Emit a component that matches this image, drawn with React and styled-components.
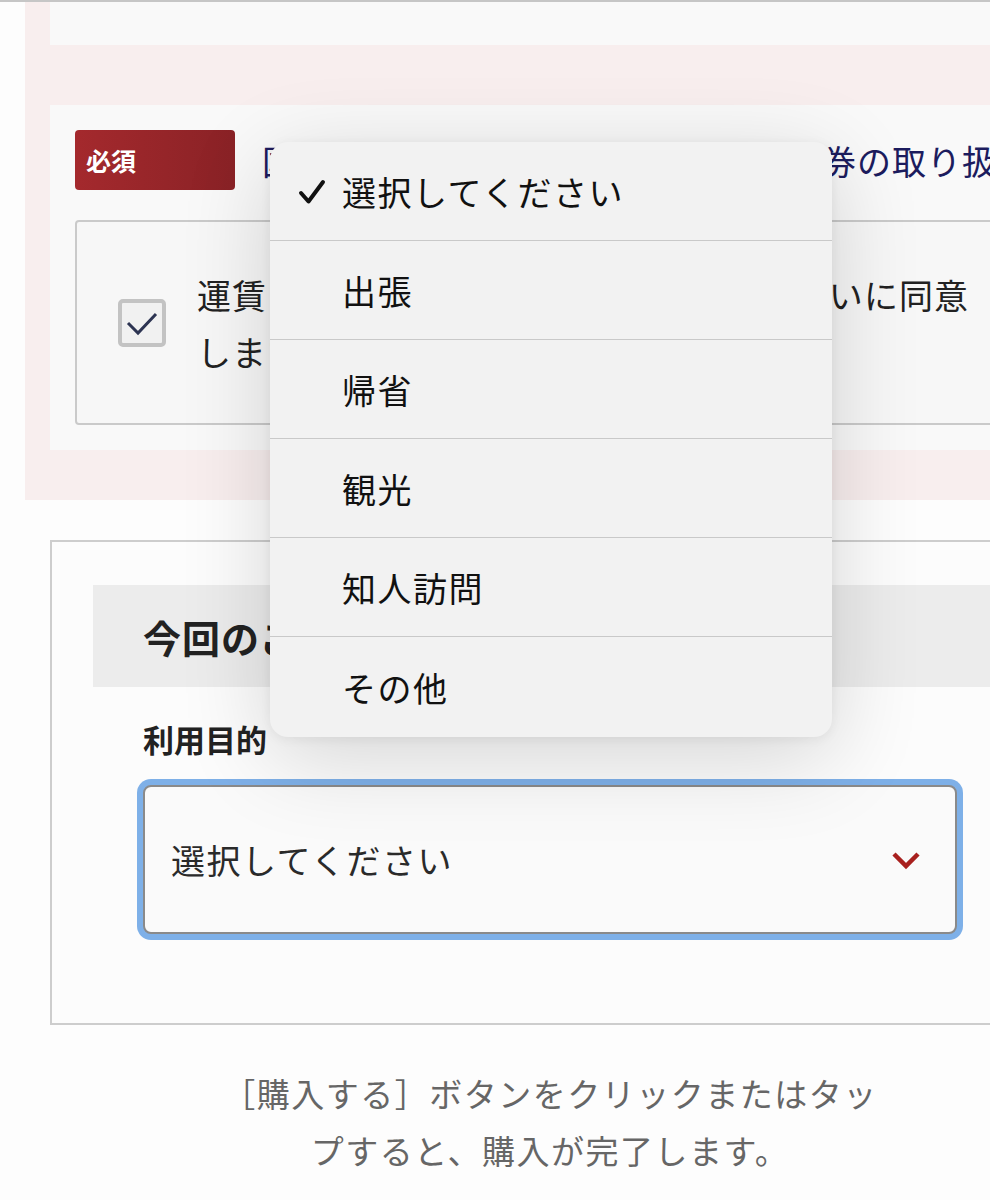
import React from "react";
import styled, { createGlobalStyle } from "styled-components";

const GlobalStyle = createGlobalStyle`
  html, body {
    margin: 0;
    padding: 0;
    background: #fdfdfd;
    overflow: hidden;
  }
  body {
    font-family: "Noto Sans CJK JP", "Noto Sans", sans-serif;
    color: #222;
  }
`;

const Page = styled.div`
  position: relative;
  width: 1100px;
  border-top: 2px solid #c6c6c6;
`;

const PinkBand = styled.div`
  margin-left: 25px;
  background: #f8eeee;
  padding: 0 0 50px 25px;
  display: flex;
  flex-direction: column;
  gap: 60px;
`;

const Card = styled.div`
  background: #f9f9f9;
  height: ${(p) => (p.stub ? "43px" : "auto")};
  padding: ${(p) => (p.stub ? "0" : "25px")};
`;

const TitleRow = styled.div`
  display: flex;
  align-items: center;
  gap: 27px;
  height: 60px;
`;

const Badge = styled.div`
  width: 160px;
  height: 60px;
  box-sizing: border-box;
  border-radius: 4px;
  background: linear-gradient(90deg, #a4292d, #8a2226);
  color: #fff;
  font-weight: 700;
  font-size: 25px;
  padding-left: 11px;
  display: flex;
  align-items: center;
  flex-shrink: 0;
`;

const Title = styled.div`
  font-size: 34px;
  letter-spacing: 1px;
  white-space: nowrap;
  color: #1c1c5e;
`;

const AgreeBox = styled.div`
  margin-top: 30px;
  border: 2px solid #cacaca;
  border-radius: 4px;
  height: 205px;
  box-sizing: border-box;
  display: flex;
  align-items: center;
  padding-left: 41px;
  gap: 31px;
  background: #f7f7f7;
`;

const CheckBox = styled.div`
  width: 48px;
  height: 48px;
  box-sizing: border-box;
  border: 4px solid #c3c3c3;
  border-radius: 5px;
  background: #f1f1f1;
  display: flex;
  align-items: center;
  justify-content: center;
  flex-shrink: 0;
`;

const AgreeText = styled.div`
  font-size: 34px;
  letter-spacing: 1.1px;
  line-height: 57px;
  color: #222;
  white-space: nowrap;
`;

const Section = styled.div`
  margin: 40px 0 0 50px;
  border: 2px solid #cdcdcd;
  padding: 43px 0 89px 41px;
  background: #fcfcfc;
`;

const HeadBand = styled.div`
  background: #ececec;
  height: 102px;
  display: flex;
  align-items: center;
  padding-left: 50px;
  font-size: 38px;
  letter-spacing: 1px;
  font-weight: 700;
  color: #222;
  white-space: nowrap;
`;

const Field = styled.div`
  padding-left: 50px;
`;

const Label = styled.div`
  margin-top: 30px;
  font-size: 31px;
  font-weight: 700;
  line-height: 44px;
  color: #222;
`;

const Select = styled.div`
  margin-top: 24px;
  width: 814px;
  height: 149px;
  box-sizing: border-box;
  border: 2px solid #8a8a8a;
  border-radius: 8px;
  box-shadow: 0 0 0 6px #7eb0e8;
  background: #fafafa;
  display: flex;
  align-items: center;
  justify-content: space-between;
  padding: 0 34px 0 26px;
  font-size: 34px;
  letter-spacing: 1.5px;
  color: #2a2a2a;
`;

const Note = styled.div`
  width: 1000px;
  margin-left: 50px;
  display: flex;
  justify-content: center;
  padding-top: 40px;
`;

const NoteText = styled.p`
  margin: 0;
  width: 660px;
  text-align: center;
  font-size: 33px;
  letter-spacing: 1.5px;
  line-height: 57px;
  color: #666;
`;

const Popover = styled.div`
  position: absolute;
  left: 270px;
  top: 140px;
  width: 562px;
  border-radius: 18px;
  background: #f2f2f2;
  box-shadow: 0 20px 90px rgba(0, 0, 0, 0.16), 0 2px 12px rgba(0, 0, 0, 0.06);
  overflow: hidden;
`;

const Option = styled.div`
  display: flex;
  align-items: center;
  padding-left: 72px;
  position: relative;
  font-size: 34px;
  letter-spacing: 1.5px;
  color: #111;
  border-top: ${(p) => (p.first ? "none" : "1.5px solid #c9c9c9")};
  height: ${(p) => (p.last ? "100px" : "98px")};
`;

const Tick = styled.span`
  position: absolute;
  left: 28px;
  top: 50%;
  margin-top: -12px;
  display: flex;
`;

const options = ["選択してください", "出張", "帰省", "観光", "知人訪問", "その他"];

export default function App() {
  return (
    <>
      <GlobalStyle />
      <Page>
        <PinkBand>
          <Card stub />
          <Card>
            <TitleRow>
              <Badge>必須</Badge>
              <Title>国内旅客営業規則及び特別企画乗車券の取り扱い</Title>
            </TitleRow>
            <AgreeBox>
              <CheckBox>
                <svg width="34" height="26" viewBox="0 0 34 26">
                  <path d="M3 13 L13 23 L31 4" fill="none" stroke="#2d3452" strokeWidth="3" />
                </svg>
              </CheckBox>
              <AgreeText>
                運賃・料金表および乗車券類等の取り扱いに同意
                <br />
                します。
              </AgreeText>
            </AgreeBox>
          </Card>
        </PinkBand>

        <Section>
          <HeadBand>今回のご利用目的を選択してください。</HeadBand>
          <Field>
            <Label>利用目的</Label>
            <Select>
              <span>選択してください</span>
              <svg width="30" height="20" viewBox="0 0 30 20">
                <path d="M3 4 L15 16 L27 4" fill="none" stroke="#a8201e" strokeWidth="4.5" />
              </svg>
            </Select>
          </Field>
        </Section>

        <Note>
          <NoteText>［購入する］ボタンをクリックまたはタップすると、購入が完了します。</NoteText>
        </Note>

        <Popover>
          {options.map((o, i) => (
            <Option key={o} first={i === 0} last={i === options.length - 1}>
              {i === 0 && (
                <Tick>
                  <svg width="28" height="26" viewBox="0 0 28 26">
                    <path d="M3 14 L10.5 22.5 L25 3" fill="none" stroke="#111" strokeWidth="4" strokeLinecap="round" strokeLinejoin="round" />
                  </svg>
                </Tick>
              )}
              {o}
            </Option>
          ))}
        </Popover>
      </Page>
    </>
  );
}
